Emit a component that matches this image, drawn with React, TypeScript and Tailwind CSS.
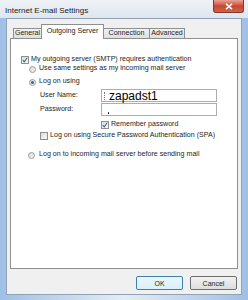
import React from "react";

const font = { fontFamily: '"Liberation Sans", Arial, sans-serif' };

function Check({ checked }: { checked?: boolean }) {
  return (
    <span className="flex h-[8px] w-[8px] shrink-0 items-center justify-center border border-[#8f8f8f] bg-gradient-to-br from-[#dcdcdc] to-[#fafafa]">
      {checked && (
        <svg width="6" height="6" viewBox="0 0 6 6">
          <path d="M0.8 3.2 L2.3 4.8 L5.2 0.8" fill="none" stroke="#4a5f97" strokeWidth="1.1" />
        </svg>
      )}
    </span>
  );
}

function Radio({ checked }: { checked?: boolean }) {
  return (
    <span className="flex h-[7px] w-[7px] shrink-0 items-center justify-center rounded-full border border-[#9a9a9a] bg-gradient-to-br from-[#d8d8d8] to-[#f8f8f8]">
      {checked && <span className="h-[3px] w-[3px] rounded-full bg-[#1b6fb5]" />}
    </span>
  );
}

const tabOff =
  "-ml-px flex h-[11px] items-center justify-center border border-b-0 border-[#8e8f8f] bg-gradient-to-b from-[#f2f2f2] to-[#dcdcdc]";

export default function App() {
  return (
    <div
      className="flex h-[300px] w-[248px] flex-col overflow-hidden bg-gradient-to-r from-[#9fc0e6] via-[#e6ecf3] to-[#9fc0e6] text-[7.1px] leading-none text-[#1e1e1e]"
      style={font}
    >
      {/* Title bar */}
      <div className="flex h-[18px] shrink-0 items-start bg-gradient-to-b from-[#eef2f6] to-[#dfe6ee]">
        <span className="mt-[7px] pl-[5px] text-[8px] text-[#222]">Internet E-mail Settings</span>
        <div className="ml-auto mr-[4px] flex h-[13px] w-[31px] items-center justify-center rounded-b-[3px] border border-t-0 border-[#7b3a33] bg-gradient-to-b from-[#e8a394] via-[#c9462f] to-[#d0624b]">
          <svg width="8" height="7" viewBox="0 0 8 7">
            <path d="M1 0.8 L7 6.2 M7 0.8 L1 6.2" stroke="#fff" strokeWidth="1.6" />
          </svg>
        </div>
      </div>

      {/* Client area */}
      <div className="mx-[6px] flex h-[277px] flex-col border border-[#8fa2b8] bg-[#f0f0f0] pl-[3px] pr-[3px]">
        {/* Tabs */}
        <div className="mt-[5px] flex h-[15px] items-end pl-[3px]">
          <div className={`${tabOff} ml-0 w-[29px]`}>General</div>
          <div className="relative z-10 -ml-px flex h-[15px] w-[63px] items-center justify-center border border-b-0 border-[#8e8f8f] bg-white">
            Outgoing Server
          </div>
          <div className={`${tabOff} w-[47px]`}>Connection</div>
          <div className={`${tabOff} w-[36px]`}>Advanced</div>
        </div>

        {/* Panel */}
        <div className="-mt-px flex h-[231px] flex-col border border-[#8e8f8f] bg-white pl-[10px]">
          <div className="mt-[17px] flex h-[8px] items-center gap-[2px]">
            <Check checked />
            <span>My outgoing server (SMTP) requires authentication</span>
          </div>

          <div className="ml-[8px] mt-[1px] flex h-[8px] items-center gap-[3px]">
            <Radio />
            <span>Use same settings as my incoming mail server</span>
          </div>
          <div className="ml-[8px] mt-[5px] flex h-[8px] items-center gap-[3px]">
            <Radio checked />
            <span>Log on using</span>
          </div>

          <div className="ml-[19px] mt-[3px] flex h-[13px] items-center">
            <span className="w-[61px] shrink-0">User Name:</span>
            <div className="flex h-[13px] w-[116px] items-center border border-[#abadb3] pl-[2px] text-[12px] text-black">
              <span className="mr-[4px] h-[8px] border-l border-dotted border-[#777]" />
              zapadst1
            </div>
          </div>
          <div className="ml-[19px] mt-[1px] flex h-[13px] items-center">
            <span className="w-[61px] shrink-0">Password:</span>
            <div className="flex h-[13px] w-[116px] items-end border border-[#abadb3] pb-[1px] pl-[6px]">
              <span className="h-[2px] w-px bg-[#333]" />
            </div>
          </div>

          <div className="ml-[19px] mt-[5px] flex h-[8px] items-center">
            <span className="w-[61px] shrink-0" />
            <Check checked />
            <span className="ml-[2px]">Remember password</span>
          </div>
          <div className="ml-[19px] mt-[3px] flex h-[8px] items-center gap-[2px]">
            <Check />
            <span>Log on using Secure Password Authentication (SPA)</span>
          </div>

          <div className="ml-[7px] mt-[11px] flex h-[8px] items-center gap-[4px]">
            <Radio />
            <span>Log on to incoming mail server before sending mail</span>
          </div>
        </div>

        {/* Buttons */}
        <div className="mt-[7px] flex justify-end gap-[7px] pr-[1px]">
          <button className="flex h-[14px] w-[47px] items-center justify-center rounded-[2px] border border-[#3c7fb1] bg-gradient-to-b from-[#eaf6fd] to-[#d9f0fc] text-[7px]">
            OK
          </button>
          <button className="flex h-[14px] w-[47px] items-center justify-center rounded-[2px] border border-[#707070] bg-gradient-to-b from-[#f2f2f2] to-[#dddddd] text-[7px]">
            Cancel
          </button>
        </div>
      </div>
    </div>
  );
}
